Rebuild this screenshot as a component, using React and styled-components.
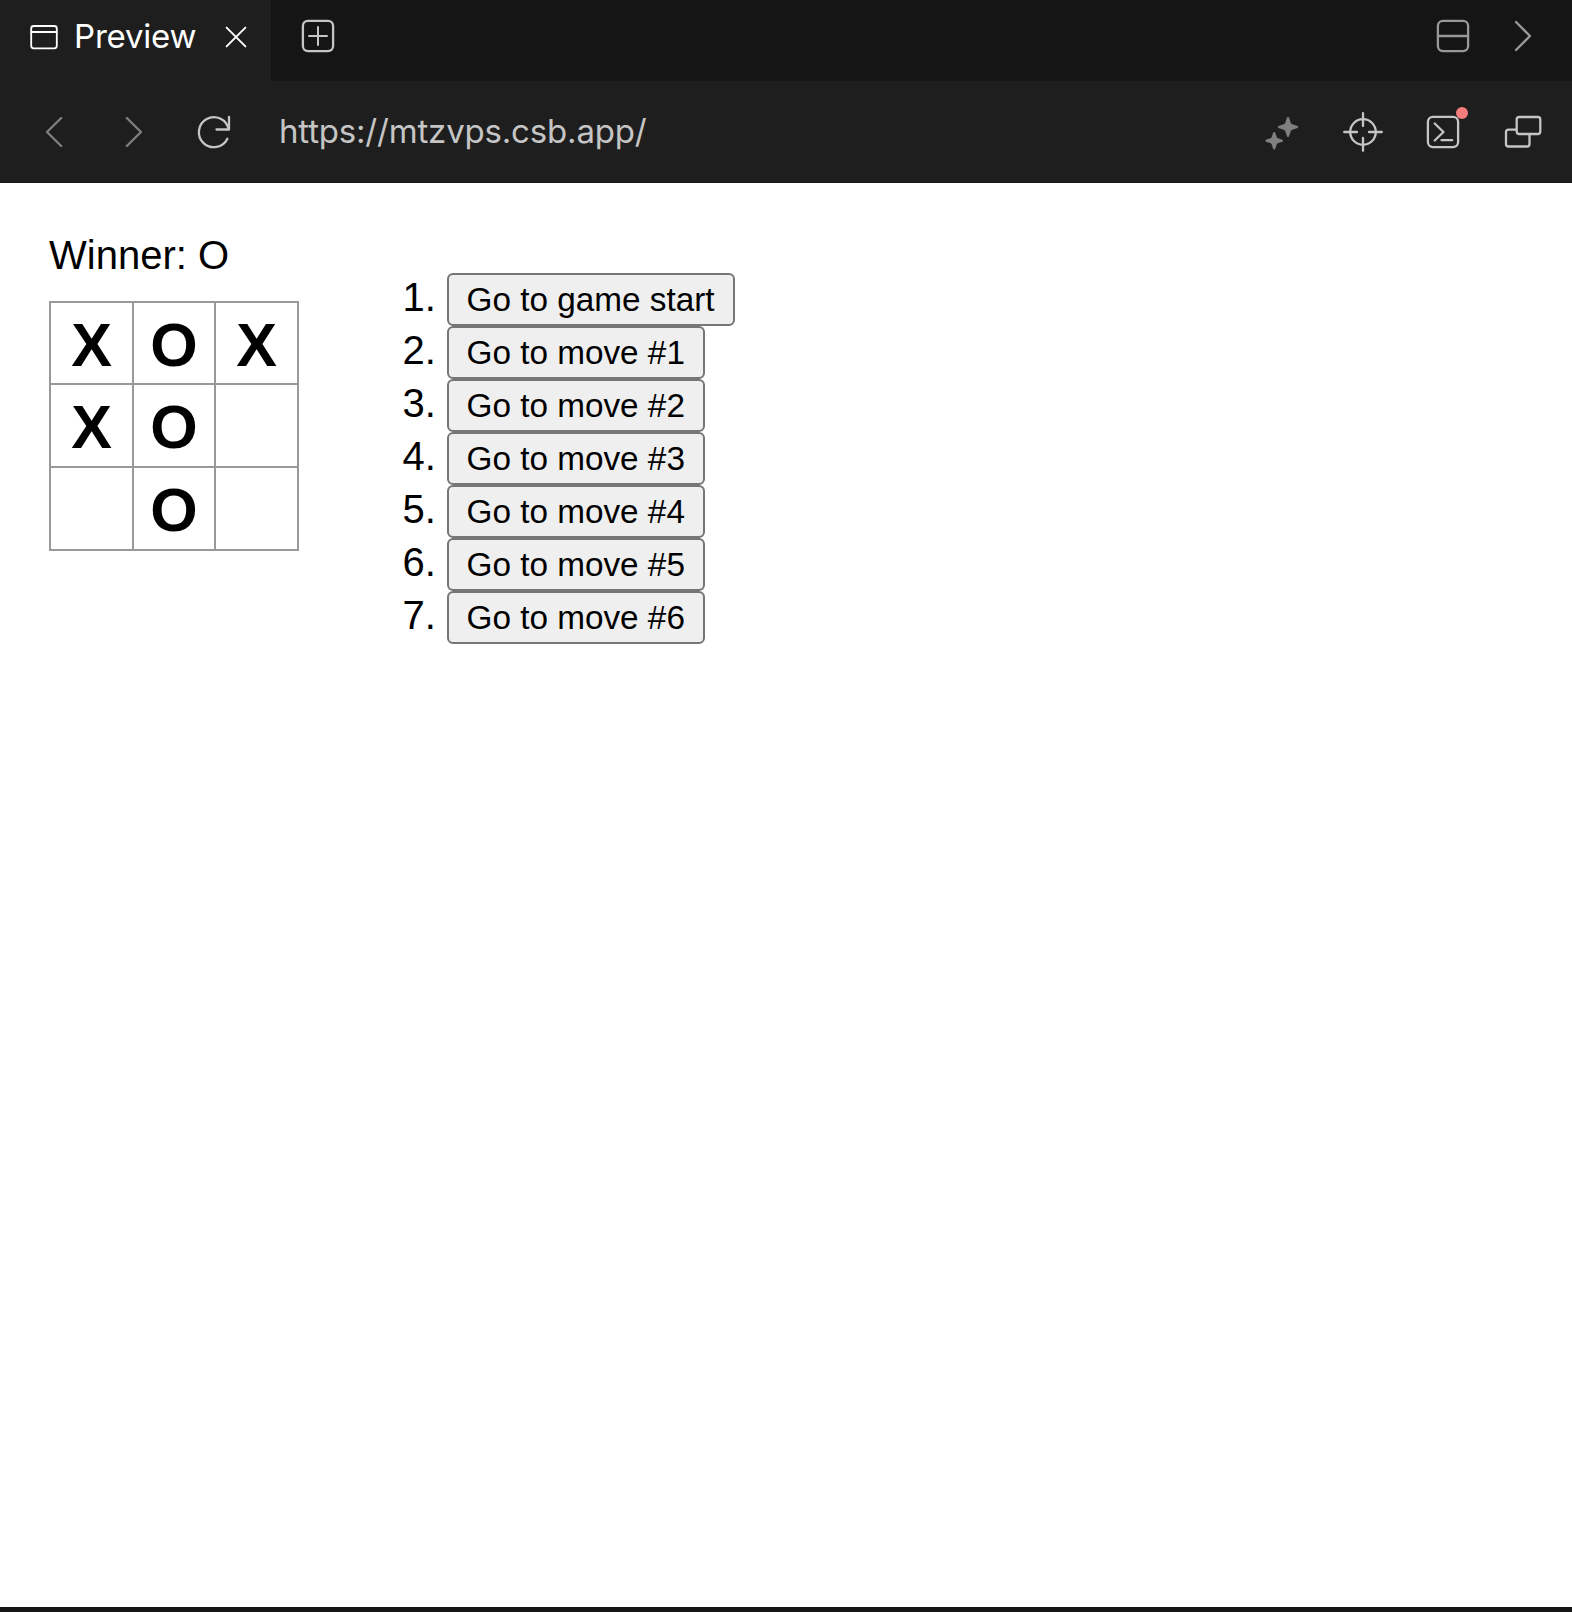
import React from "react";
import styled, { createGlobalStyle } from "styled-components";

const GlobalStyle = createGlobalStyle`
  * { box-sizing: border-box; }
  body { margin: 0; background: #151515; }
`;

const Shell = styled.div`
  display: flex;
  flex-direction: column;
  height: 1612px;
  background: #151515;
  font-family: Inter, "Liberation Sans", sans-serif;
  font-size: 33px;
`;

const TabStrip = styled.header`
  display: flex;
  height: 81px;
  padding-right: 29px;
`;

const Tab = styled.div`
  display: flex;
  align-items: center;
  width: 271px;
  padding: 0 15px 9px 24px;
  background: #1e1e1e;
  color: #fff;
`;

const TabLabel = styled.span`
  flex: 1;
  margin-left: 10px;
  line-height: 40px;
  letter-spacing: -0.2px;
`;

const StripActions = styled.div`
  display: flex;
  flex: 1;
  align-items: center;
  gap: 30px;
  padding: 0 0 9px 27px;
`;

const Spacer = styled.div`
  flex: 1;
`;

const Toolbar = styled.nav`
  display: flex;
  align-items: center;
  gap: 40px;
  height: 102px;
  padding: 0 29px 0 34px;
  background: #1e1e1e;
  border-bottom: 1px solid #151515;
`;

const Address = styled.span`
  flex: 1;
  margin-left: 5px;
  padding-bottom: 2px;
  line-height: 40px;
  letter-spacing: -0.18px;
  color: #c5c5c5;
`;

const IconButton = styled.button`
  display: flex;
  flex: none;
  width: 40px;
  height: 40px;
  padding: 0;
  border: 0;
  background: none;
  color: ${(p) => p.$color || "#c5c5c5"};

  svg {
    overflow: visible;
    fill: none;
    stroke: currentColor;
    stroke-width: ${(p) => p.$stroke || 2.3};
    stroke-linecap: round;
    stroke-linejoin: round;
  }
`;

const Page = styled.main`
  display: flex;
  align-items: flex-start;
  height: 1424px;
  padding: 49px;
  background: #fff;
  color: #000;
  font-family: "Liberation Sans", Arial, sans-serif;
  font-size: 40px;
`;

const Status = styled.div`
  height: 69px;
  line-height: 46px;
`;

const Board = styled.div`
  display: grid;
  grid-template-columns: 83px 82px 83px;
  grid-template-rows: 82px 83px 83px;
  width: 250px;
  border: solid #999;
  border-width: 2px 0 0 2px;
`;

const Square = styled.button`
  display: flex;
  align-items: flex-start;
  justify-content: center;
  padding: 0;
  border: solid #999;
  border-width: 0 2px 2px 0;
  background: #fff;
  color: #000;
  font: bold 61px/84px "Liberation Sans", Arial, sans-serif;
`;

const Moves = styled.ol`
  margin: 41px 0 0 49px;
  padding-left: 99px;
  line-height: 40px;
`;

const MoveItem = styled.li`
  height: 53px;
`;

const MoveButton = styled.button`
  height: 53px;
  padding: 0 18.5px 0 17.5px;
  border: 2px solid #767676;
  border-radius: 6px;
  background: #efefef;
  color: #000;
  font: 33.3px/49px "Liberation Sans", Arial, sans-serif;
  white-space: nowrap;
`;

function Icon({ label, color, stroke, children }) {
  return (
    <IconButton aria-label={label} $color={color} $stroke={stroke}>
      <svg width="40" height="40" viewBox="0 0 40 40">
        {children}
      </svg>
    </IconButton>
  );
}

const squares = ["X", "O", "X", "X", "O", "", "", "O", ""];
const moves = [
  "Go to game start",
  "Go to move #1",
  "Go to move #2",
  "Go to move #3",
  "Go to move #4",
  "Go to move #5",
  "Go to move #6",
];

export default function App() {
  return (
    <Shell>
      <GlobalStyle />
      <TabStrip>
        <Tab>
          <Icon label="Window" color="#fff" stroke={1.8}>
            <rect x="7.2" y="10" width="25.6" height="22.3" rx="2.5" />
            <path d="M7.2 16H32.8" />
          </Icon>
          <TabLabel>Preview</TabLabel>
          <Icon label="Close" color="#fff" stroke={1.9}>
            <path d="M10.6 11.6L29.4 30.4M29.4 11.6L10.6 30.4" />
          </Icon>
        </Tab>
        <StripActions>
          <Icon label="New tab">
            <rect x="4.9" y="4.9" width="30.2" height="30.2" rx="5" />
            <path d="M20 11V29M11 20H29" strokeWidth="2" />
          </Icon>
          <Spacer />
          <Icon label="Split" color="#999">
            <rect x="4.9" y="4.9" width="30.2" height="30.2" rx="5" />
            <path d="M5 20H35" />
          </Icon>
          <Icon label="Collapse" color="#999">
            <path d="M13 6L27 20L13 34" />
          </Icon>
        </StripActions>
      </TabStrip>

      <Toolbar>
        <Icon label="Back" color="#808080">
          <path d="M27.2 6L13 20L27.2 34" />
        </Icon>
        <Icon label="Forward" color="#808080">
          <path d="M12.8 6L27 20L12.8 34" />
        </Icon>
        <Icon label="Reload">
          <path d="M35 5V17.5H22.5" />
          <path d="M34.6 17.2A15 15 0 1 0 33.4 26.7" />
        </Icon>
        <Address>https://mtzvps.csb.app/</Address>
        <Icon label="Assistant" color="#808080" stroke={1.4}>
          <path
            d="M24.7 5.7H25.3L27.3 11.6L28.4 12.7L34.3 14.7V15.3L28.4 17.3L27.3 18.4L25.3 24.3H24.7L22.7 18.4L21.6 17.3L15.7 15.3V14.7L21.6 12.7L22.7 11.6Z"
            fill="currentColor"
          />
          <path
            d="M10.9 20.7H11.5L13.2 25.7L14.2 26.7L19.2 28.4V29L14.2 30.7L13.2 31.7L11.5 36.7H10.9L9.2 31.7L8.2 30.7L3.2 29V28.4L8.2 26.7L9.2 25.7Z"
            fill="currentColor"
          />
        </Icon>
        <Icon label="Inspect">
          <circle cx="20" cy="20" r="12.8" />
          <path d="M20 1.2V14M20 26V38.8M1.2 20H14M26 20H38.8" />
        </Icon>
        <Icon label="Console">
          <rect x="4.9" y="4.9" width="30.2" height="30.2" rx="5" />
          <path d="M11.7 11.5L20.5 20L11.7 28.5M18.5 28.2H29.2" />
          <circle cx="39" cy="1" r="6" fill="#f47c7c" stroke="none" />
        </Icon>
        <Icon label="Open in new window">
          <path d="M13 17.7H5.5A2.5 2.5 0 0 0 3 20.2V32A2.5 2.5 0 0 0 5.5 34.5H24A2.5 2.5 0 0 0 26.5 32V22.5" />
          <rect x="13.7" y="5" width="23.6" height="17" rx="2.5" />
        </Icon>
      </Toolbar>

      <Page>
        <section>
          <Status>Winner: O</Status>
          <Board>
            {squares.map((value, i) => (
              <Square key={i}>{value}</Square>
            ))}
          </Board>
        </section>
        <Moves>
          {moves.map((text) => (
            <MoveItem key={text}>
              <MoveButton>{text}</MoveButton>
            </MoveItem>
          ))}
        </Moves>
      </Page>
    </Shell>
  );
}
